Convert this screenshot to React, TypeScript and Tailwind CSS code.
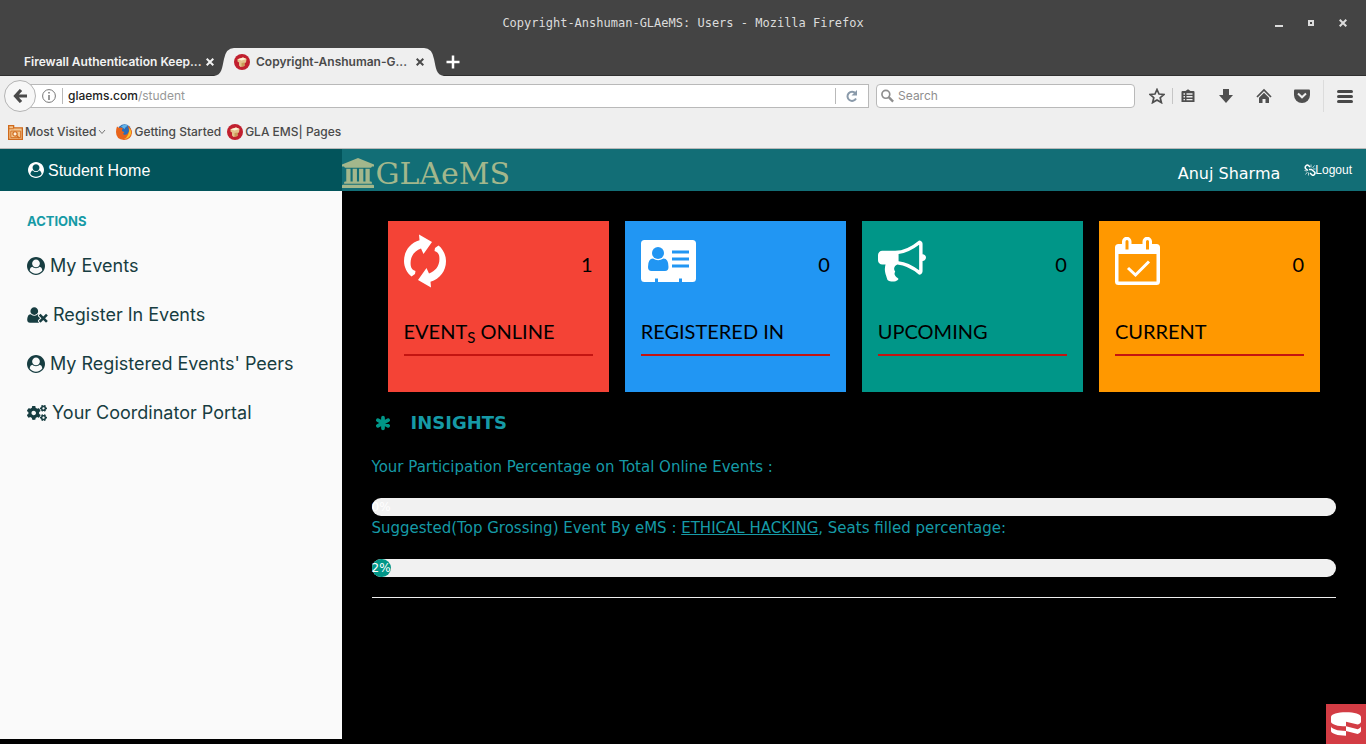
import React from "react";
import { FaCogs } from "react-icons/fa";
import { SiCakephp } from "react-icons/si";

type IconProps = { className?: string };

function UserCircle({ className }: IconProps) {
  return (
    <svg viewBox="0 0 1792 1792" fill="currentColor" className={className} aria-hidden="true">
      <path d="M1523 1339q-22-155-87.5-257.5t-184.5-118.5q-67 74-159.5 115.5t-195.5 41.5-195.5-41.5-159.5-115.5q-119 16-184.5 118.5t-87.5 257.5q106 150 271 237.5t356 87.5 356-87.5 271-237.5zm-243-699q0-159-112.5-271.5t-271.5-112.5-271.5 112.5-112.5 271.5 112.5 271.5 271.5 112.5 271.5-112.5 112.5-271.5zm512 256q0 182-71 347.5t-190.5 286-285.5 191.5-349 71q-182 0-348-71t-286-191-191-286-71-348 71-348 191-286 286-191 348-71 348 71 286 191 191 286 71 348z" />
    </svg>
  );
}

function UserTimes({ className }: IconProps) {
  return (
    <svg viewBox="0 0 2048 1792" fill="currentColor" className={className} aria-hidden="true">
      <path d="M704 896q-159 0-271.5-112.5t-112.5-271.5 112.5-271.5 271.5-112.5 271.5 112.5 112.5 271.5-112.5 271.5-271.5 112.5zm1077 320l249 249q9 9 9 23 0 13-9 22l-136 136q-9 9-22 9-14 0-23-9l-249-249-249 249q-9 9-23 9-13 0-22-9l-136-136q-9-9-9-22 0-14 9-23l249-249-249-249q-9-9-9-23 0-13 9-22l136-136q9-9 22-9 14 0 23 9l249 249 249-249q9-9 23-9 13 0 22 9l136 136q9 9 9 22 0 14-9 23zm-498 0l-181 181q-37 37-37 91 0 53 37 90l83 83q-21 3-44 3h-874q-121 0-194-69t-73-190q0-53 3.5-103.5t14-109 26.5-108.5 43-97.5 62-81 85.5-53.5 111.5-20q19 0 39 17 154 122 319 122t319-122q20-17 39-17 28 0 57 6-28 27-41 50t-13 56q0 54 37 91z" />
    </svg>
  );
}

function Bank({ className }: IconProps) {
  return (
    <svg viewBox="0 0 1920 1792" fill="currentColor" className={className} aria-hidden="true">
      <path d="M960 0l960 384v128h-128q0 26-20.5 45t-48.5 19h-1526q-28 0-48.5-19t-20.5-45h-128v-128zm-704 640h256v768h128v-768h256v768h128v-768h256v768h128v-768h256v768h59q28 0 48.5 19t20.5 45v64h-1664v-64q0-26 20.5-45t48.5-19h59v-768zm1595 960q28 0 48.5 19t20.5 45v128h-1920v-128q0-26 20.5-45t48.5-19h1782z" />
    </svg>
  );
}

function BrokenChain() {
  return (
    <svg viewBox="0 0 12 12" width="12" height="12" fill="none" stroke="currentColor" className="-mr-px" aria-hidden="true">
      <path d="M6 3L4.500 1.500Q3.300 0.500 2 1.800T1.500 4.500L4 6.500M6 9L8 11Q9.200 11.800 10.400 10.400T10.500 8L7.500 5.500L5 5.500" strokeWidth="1.500" />
      <path d="M7 3.500V0.500M8.500 4L10.500 1.500M9 5H11.500M3 7L0.500 6.500M3.500 8L1.500 10.500M4.500 8.500V11.500" strokeWidth="0.700" />
    </svg>
  );
}

function Asterisk() {
  return (
    <svg viewBox="0 0 18 18" width="16" height="18" stroke="#009688" strokeWidth="4.200" strokeLinecap="round" className="ml-[3px]" aria-hidden="true">
      <path d="M9 3V15M3.200 5.800L14.800 12.200M14.800 5.800L3.200 12.200" />
    </svg>
  );
}

function Refresh() {
  const arrow =
    "M15 0.500 L28 8 L19.500 20 L17 14.500 C10 17 5.500 23 6.800 32 C7.200 34.500 9 36.500 11.500 37 L11 40 L7.500 42.500 C3 39 0 33 0 27 C0 17 6 9 15.500 6.200 Z";
  return (
    <svg viewBox="0 0 42 54" width="42" height="54" fill="white" className="mb-1.5" aria-hidden="true">
      <path d={arrow} />
      <path transform="rotate(180 21 27)" d={arrow} />
    </svg>
  );
}

function AddressCard() {
  return (
    <svg viewBox="0 0 56 54" width="56" height="54" aria-hidden="true">
      <path fill="white" d="M3.500 3H51.500A3.500 3.500 0 0 1 55 6.500V41.500A3.500 3.500 0 0 1 51.500 45H41V41.500H38V45H17V41.500H14V45H3.500A3.500 3.500 0 0 1 0 41.500V6.500A3.500 3.500 0 0 1 3.500 3Z" />
      <g fill="#2196f3">
        <circle cx="17" cy="16" r="6" />
        <path d="M12 21.500Q17 25 22.500 21.500Q27.500 21.500 27.500 30Q27.500 34 24 34H10.500Q7 34 7 30Q7 21.500 12 21.500Z" />
        <path d="M31 13.500h17v3h-17zM31 20.500h17v3h-17zM31 27.500h17v3h-17z" />
      </g>
    </svg>
  );
}

function Bullhorn() {
  return (
    <svg viewBox="0 0 1792 2016" width="48" height="54" fill="white" aria-hidden="true">
      <path d="M1664 640q53 0 90.500 37.500t37.500 90.500-37.500 90.500-90.500 37.500v384q0 52-38 90t-90 38q-417-347-812-380-58 19-91 66t-31 100.500 40 92.500q-20 33-23 65.500t6 58 33.500 55 48 50 61.500 50.500q-29 58-111.500 83t-168.500 11.500-132-55.500q-7-23-29.500-87.500t-32-94.500-23-89-15-101 3.500-98.500 22-110.500h-122q-66 0-113-47t-47-113v-192q0-66 47-113t113-47h480q435 0 896-384 52 0 90 38t38 90v384zm-128 604v-954q-394 302-768 343v270q377 42 768 341z" />
    </svg>
  );
}

function CalendarCheck() {
  return (
    <svg viewBox="0 0 45 54" width="45" height="54" aria-hidden="true">
      <path fill="white" fillRule="evenodd" d="M3.500 7H7V4.500A4.500 4.500 0 0 1 16.500 4.500V7H27.500V4.500A4.500 4.500 0 0 1 37 4.500V7H41.500A3.500 3.500 0 0 1 45 10.500V44.500A3.500 3.500 0 0 1 41.500 48H3.500A3.500 3.500 0 0 1 0 44.500V10.500A3.500 3.500 0 0 1 3.500 7ZM3.500 17V44.500H41.500V17ZM10.500 4.500V12.500H13.500V4.500A1.500 1.500 0 0 0 10.500 4.500ZM31 4.500V12.500H34V4.500A1.500 1.500 0 0 0 31 4.500Z" />
      <path d="M13 31L20.500 38L34 24.500" stroke="white" strokeWidth="3" fill="none" />
    </svg>
  );
}

function SiteBadge() {
  return (
    <svg viewBox="0 0 16 16" className="size-4 shrink-0" aria-hidden="true">
      <circle cx="8" cy="8" r="8" fill="#c1202f" />
      <path d="M3.500 5.200L9 3.500L12.500 5L12 8.500L10.500 9V12L6.500 13L5 11.500V8.500L3.500 7.500Z" fill="#e3c28c" />
      <path d="M3.500 5.200L9 3.500L12.500 5L7.500 6.500Z" fill="#fff3d6" />
      <path d="M7.500 9L10.500 8.500V12L7.500 12.700Z" fill="#c99c58" />
    </svg>
  );
}

function FirefoxBadge() {
  return (
    <svg viewBox="0 0 16 16" className="size-4 shrink-0" aria-hidden="true">
      <circle cx="8.500" cy="7" r="6.800" fill="#2b6cb8" />
      <path d="M5 2.500Q8 -0.500 12 1.500Q9 3 8.500 5Z" fill="#63b4e8" />
      <path d="M1 2.500Q2.500 3 3 4Q5 3 7 4.500Q5.500 5.500 6 7Q8 7.500 8.500 8.500Q6.500 9 7.500 10.500Q11 12 13 7Q12.500 3 11.500 1.500Q16 4 16 9Q15 16 8 16Q0 15.500 0 8Q0 5 1 2.500Z" fill="#e8641b" />
      <path d="M13.500 4Q16.500 8 14 12Q11.500 15.500 8 15Q13 13 13.500 4Z" fill="#fbc02d" />
    </svg>
  );
}

function Cross({ className }: IconProps) {
  return (
    <svg viewBox="0 0 8 8" className={className} stroke="currentColor" strokeWidth="2" aria-hidden="true">
      <path d="M0.700 0.700L7.300 7.300M7.300 0.700L0.700 7.300" />
    </svg>
  );
}

function BrowserChrome() {
  return (
    <div className="text-xs text-[#4a4a4a] font-['Inter',sans-serif]">
      <div className="flex h-12 items-center bg-[#444444] pr-[19px] pb-0.5 pl-[91px] text-[#dcdcdc]">
        <div className="flex-1 text-center font-['DejaVu_Sans_Mono',monospace] text-xs">
          Copyright-Anshuman-GLAeMS: Users - Mozilla Firefox
        </div>
        <div className="flex items-center gap-6">
          <button aria-label="Minimize" className="flex h-2 w-2 items-end">
            <span className="h-0.5 w-2 bg-[#dcdcdc]" />
          </button>
          <button aria-label="Restore" className="mx-px size-1.5 border-2 border-[#dcdcdc]" />
          <button aria-label="Close window">
            <Cross className="size-2" />
          </button>
        </div>
      </div>

      <div className="flex h-7 items-stretch border-b border-[#2f2f2f] bg-[#444444] font-semibold">
        <div className="flex w-[214px] items-center justify-between pl-6 text-[#f2f2f2]">
          <span className="whitespace-nowrap">Firewall Authentication Keep...</span>
          <button aria-label="Close first tab">
            <Cross className="size-2" />
          </button>
        </div>
        <div className="flex h-7 text-[#efefef]">
          <svg viewBox="0 0 20 28" width="20" height="28" fill="currentColor" aria-hidden="true">
            <path d="M0 28C8 27 8 20 10 11Q12 0 20 0V28Z" />
          </svg>
          <div className="flex w-[190px] items-center bg-[#efefef] text-[#4a4a4a]">
            <SiteBadge />
            <span className="ml-1.5 flex-1 whitespace-nowrap">Copyright-Anshuman-G...</span>
            <button aria-label="Close second tab">
              <Cross className="size-2" />
            </button>
          </div>
          <svg viewBox="0 0 20 28" width="20" height="28" fill="currentColor" aria-hidden="true">
            <path d="M20 28C12 27 12 20 10 11Q8 0 0 0V28Z" />
          </svg>
        </div>
        <button aria-label="New tab" className="ml-0.5 text-white">
          <svg viewBox="0 0 14 14" width="14" height="14" stroke="currentColor" strokeWidth="2.500" aria-hidden="true">
            <path d="M7 0.500V13.500M0.500 7H13.500" />
          </svg>
        </button>
      </div>

      <div className="flex h-10 items-center bg-[#efefef] pl-1">
        <button aria-label="Back" className="z-10 flex size-8 shrink-0 items-center justify-center rounded-full border border-[#b4b4b4] bg-[#f7f7f7]">
          <svg viewBox="0 0 14 14" width="14" height="14" fill="none" stroke="#4a4a4a" strokeWidth="3.200" aria-hidden="true">
            <path d="M8 1L2.500 7L8 13M2.500 7H14" />
          </svg>
        </button>
        <div className="-ml-2 flex h-6 flex-1 items-center border border-[#b9b9b9] bg-white pl-[13px]">
          <svg viewBox="0 0 14 14" width="14" height="14" fill="none" stroke="#777777" aria-hidden="true">
            <circle cx="7" cy="7" r="6.400" />
            <path d="M7 3V4.500M7 6V11" strokeWidth="1.500" />
          </svg>
          <span className="mr-[5px] ml-1.5 h-4 w-px bg-[#b9b9b9]" />
          <a href="#address" className="flex-1 text-[#989898]">
            <span className="font-medium text-[#222222]">glaems.com</span>/student
          </a>
          <button aria-label="Reload" className="flex h-4 items-center border-l border-[#b9b9b9] px-2.5">
            <svg viewBox="0 0 12 12" width="12" height="12" fill="none" stroke="#8a9aaa" strokeWidth="2" aria-hidden="true">
              <path d="M9.500 3.500A4.500 4.500 0 1 0 10 8.500" />
              <path d="M11 0V5.500H5.500Z" fill="#8a9aaa" stroke="none" />
            </svg>
          </button>
        </div>
        <label className="ml-[7px] flex h-6 w-[259px] items-center rounded-sm border border-[#b9b9b9] bg-white pl-1">
          <svg viewBox="0 0 14 14" width="14" height="14" fill="none" stroke="#8e8e8e" strokeWidth="1.800" aria-hidden="true">
            <circle cx="5.200" cy="5.200" r="4.200" />
            <path d="M8.500 8.500L13 13" strokeWidth="2.500" />
          </svg>
          <input aria-label="Search" placeholder="Search" className="ml-1 w-full bg-transparent outline-none placeholder:text-[#8e8e8e]" />
        </label>
        <div className="flex items-center pr-[13px] pl-3.5 text-[#4f4f4f]">
          <button aria-label="Bookmark this page">
            <svg viewBox="0 0 16 16" width="16" height="16" fill="none" stroke="currentColor" strokeWidth="1.700" aria-hidden="true">
              <path d="M8 1.500L10 6L15 6.400L11.200 9.700L12.400 14.600L8 12L3.600 14.600L4.800 9.700L1 6.400L6 6Z" />
            </svg>
          </button>
          <span className="mx-[7px] h-4 w-px bg-[#c6c6c6]" />
          <button aria-label="Bookmarks list">
            <svg viewBox="0 0 16 16" width="16" height="16" aria-hidden="true">
              <path d="M2.500 3H5.500L8 1.200L10.500 3H13.500Q14.500 3 14.500 4V14H1.500V4Q1.500 3 2.500 3Z" fill="currentColor" />
              <path d="M3.500 6H5M6.500 6H12.500M3.500 8.800H5M6.500 8.800H12.500M3.500 11.600H5M6.500 11.600H12.500" stroke="#efefef" strokeWidth="1.400" />
            </svg>
          </button>
          <button aria-label="Downloads" className="ml-[22px]">
            <svg viewBox="0 0 16 16" width="16" height="16" fill="currentColor" aria-hidden="true">
              <path d="M5 1H11V7H15L8 15L1 7H5Z" />
            </svg>
          </button>
          <button aria-label="Home page" className="ml-[22px]">
            <svg viewBox="0 0 16 16" width="16" height="16" fill="none" aria-hidden="true">
              <path d="M1 9L8 2L15 9" stroke="currentColor" strokeWidth="1.700" />
              <path d="M8 4.800L13 9.800V15H9.500V11H6.500V15H3V9.800Z" fill="currentColor" />
            </svg>
          </button>
          <button aria-label="Pocket" className="ml-[22px]">
            <svg viewBox="0 0 16 16" width="16" height="16" fill="none" aria-hidden="true">
              <path d="M1 1.500H15Q16 1.500 16 2.500V7A8 8 0 0 1 0 7V2.500Q0 1.500 1 1.500Z" fill="currentColor" />
              <path d="M4 5.500L8 9.300L12 5.500" stroke="#efefef" strokeWidth="2" />
            </svg>
          </button>
          <span className="mr-3 ml-[13px] h-8 w-px bg-[#dcdcdc]" />
          <button aria-label="Open menu" className="flex flex-col gap-0.5 pl-px">
            <span className="h-[3px] w-4 rounded-sm bg-[#484848]" />
            <span className="h-[3px] w-4 rounded-sm bg-[#484848]" />
            <span className="h-[3px] w-4 rounded-sm bg-[#484848]" />
          </button>
        </div>
      </div>

      <nav aria-label="Bookmarks" className="flex h-[33px] items-center gap-1.5 border-b border-[#b9b9b9] bg-[#efefef] pl-2 font-medium">
        <a href="#visited" className="flex items-center gap-0.5">
          <svg viewBox="0 0 16 16" width="15" height="15" fill="none" stroke="#d06a1c" aria-hidden="true">
            <path d="M0.700 0.700H6V3H15.300V15.300H0.700Z" fill="#f3c68f" strokeWidth="1.400" />
            <path d="M0.700 4H6M3 6.500H13.500V13.500H3Z" />
            <circle cx="7.500" cy="9.500" r="2.300" fill="#fff0dc" strokeWidth="1.300" />
            <path d="M9.500 11.500L12 14" strokeWidth="1.500" />
          </svg>
          Most Visited
          <svg viewBox="0 0 8 6" width="8" height="6" fill="none" stroke="#777777" aria-hidden="true">
            <path d="M1 1L4 4.500L7 1" />
          </svg>
        </a>
        <a href="#started" className="ml-1 flex items-center gap-0.5">
          <FirefoxBadge />
          Getting Started
        </a>
        <a href="#pages" className="flex items-center gap-0.5">
          <SiteBadge />
          GLA EMS| Pages
        </a>
      </nav>
    </div>
  );
}

const cards = [
  { key: "online", color: "bg-[#f44336]", icon: <Refresh />, value: "1", title: <>EVENT<sub className="text-[15px]">S</sub> ONLINE</> },
  { key: "registered", color: "bg-[#2196f3]", icon: <AddressCard />, value: "0", title: <>REGISTERED IN</> },
  { key: "upcoming", color: "bg-[#009688]", icon: <Bullhorn />, value: "0", title: <>UPCOMING</> },
  { key: "current", color: "bg-[#ff9800]", icon: <CalendarCheck />, value: "0", title: <>CURRENT</> },
];

const actions = [
  { label: "My Events", icon: <UserCircle className="size-[18px]" /> },
  { label: "Register In Events", icon: <UserTimes className="h-[18px] w-[21px]" /> },
  { label: "My Registered Events' Peers", icon: <UserCircle className="size-[18px]" /> },
  { label: "Your Coordinator Portal", icon: <FaCogs className="h-[18px] w-5" /> },
];

function Progress({ percent }: { percent: number }) {
  return (
    <div className="h-[18px] rounded-full bg-[#f1f1f1] text-xs leading-[18px] text-white">
      <div className="h-full rounded-full bg-[#009688]" style={{ width: `${percent}%` }}>
        {percent}%
      </div>
    </div>
  );
}

export default function App() {
  return (
    <div className="flex min-h-screen flex-col bg-black">
      <BrowserChrome />

      <header className="flex h-[42px] text-white">
        <div className="flex w-1/4 items-center gap-1 bg-[#02545b] pl-7 font-['Liberation_Sans',sans-serif] text-base">
          <UserCircle className="size-4" />
          <a href="#home" className="pt-0.5">Student Home</a>
        </div>
        <div className="flex flex-1 items-center bg-[#126e76] pr-3.5">
          <a href="#top" className="flex items-center gap-0.5 pt-1.5 font-['DejaVu_Serif',serif] text-[30px] leading-8 text-[#a3b78c]">
            <Bank className="h-[30px] w-8" />
            <span className="pt-0.5">GLAeMS</span>
          </a>
          <span className="ml-auto pt-2 font-['DejaVu_Sans',sans-serif] text-base">Anuj Sharma</span>
          <a href="#logout" className="ml-6 flex items-center font-['Liberation_Sans',sans-serif] text-xs">
            <BrokenChain />
            Logout
          </a>
        </div>
      </header>

      <div className="mb-[5px] flex flex-1">
        <aside className="w-1/4 bg-[#fafafa] pt-[21px] pl-[27px] font-['Inter',sans-serif]">
          <h2 className="text-[13px] leading-[18px] font-bold text-[#169aa6]">ACTIONS</h2>
          <ul className="mt-[22px] flex flex-col gap-[21px] text-lg text-[#173d41]">
            {actions.map((item) => (
              <li key={item.label}>
                <a href="#action" className="flex items-center gap-[5px] whitespace-nowrap">
                  {item.icon}
                  {item.label}
                </a>
              </li>
            ))}
          </ul>
        </aside>

        <main className="flex-1 px-[30px] pt-[30px] font-['DejaVu_Sans',sans-serif] text-[#169aa6]">
          <section className="grid grid-cols-4 gap-4 px-4 font-['Lato',sans-serif] text-xl text-black">
            {cards.map((card) => (
              <article key={card.key} className={`${card.color} h-[171px] p-4`}>
                <div className="flex h-[54px] items-center justify-between">
                  {card.icon}
                  <span>{card.value}</span>
                </div>
                <h3 className="mt-6 h-[41px] border-b-2 border-[#c41411] leading-8">{card.title}</h3>
              </article>
            ))}
          </section>

          <h2 className="mt-[18px] flex items-center gap-5 text-lg leading-[26px] font-bold">
            <Asterisk />
            INSIGHTS
          </h2>
          <p className="mt-5 text-[15px] leading-[22px]">Your Participation Percentage on Total Online Events :</p>
          <div className="mt-5">
            <Progress percent={0} />
          </div>
          <p className="pt-px text-[15px] leading-[22px]">
            Suggested(Top Grossing) Event By eMS : <a href="#event" className="underline">ETHICAL HACKING</a>, Seats filled percentage:
          </p>
          <div className="mt-5">
            <Progress percent={2} />
          </div>
          <hr className="mt-5 border-[#eeeeee]" />
        </main>
      </div>

      <button aria-label="Toggle debug toolbar" className="fixed right-0 bottom-0 flex size-10 items-center justify-center bg-[#d33c44] text-white">
        <SiCakephp className="size-[30px]" />
      </button>
    </div>
  );
}
